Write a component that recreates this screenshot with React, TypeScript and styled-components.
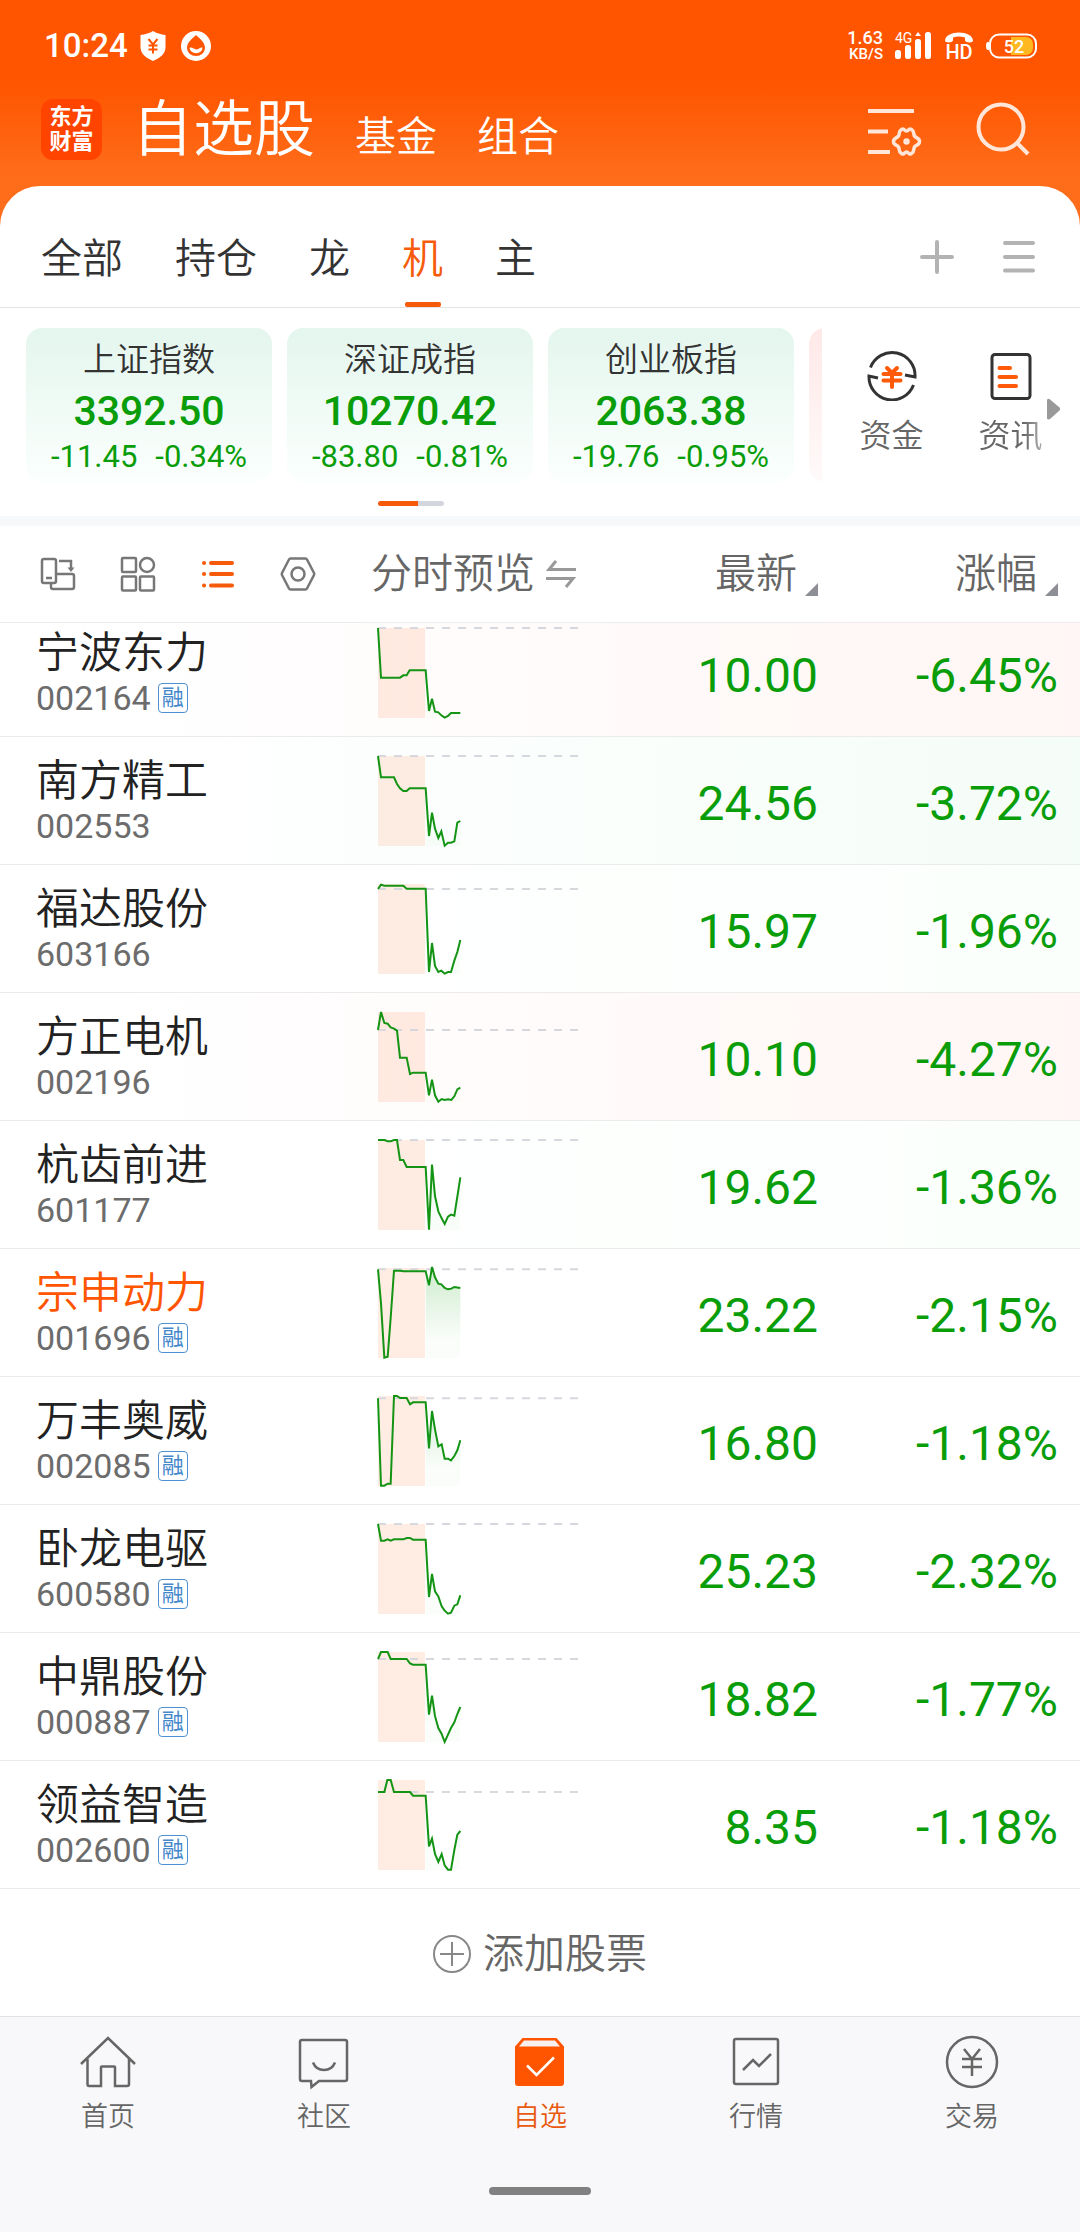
import React from "react";
import styled, { createGlobalStyle } from "styled-components";

const GREEN = "#0a9d0a";
const ORANGE = "#ff5500";
const CJK = `Roboto, "Noto Sans CJK SC", sans-serif`;

const GlobalStyle = createGlobalStyle`
  * { box-sizing: border-box; }
  body { margin: 0; background: #f8f8fa; font-family: ${CJK}; color: #222; }
  h1, h2, p { margin: 0; font-weight: 400; }
  button { border: 0; padding: 0; background: none; font: inherit; color: inherit; cursor: pointer; }
  a { color: inherit; text-decoration: none; }
  svg { display: block; flex: none; }
`;

const Screen = styled.div`
  display: flex;
  flex-direction: column;
  min-height: 100vh;
  background: #fff;
`;

/* Header */

const Header = styled.header`
  padding-bottom: 40px;
  margin-bottom: -40px;
  background: linear-gradient(${ORANGE} 0, ${ORANGE} 84px, #ff6d1a 176px);
  color: #fff;
`;

const StatusBar = styled.div`
  display: flex;
  align-items: center;
  height: 92px;
  padding: 0 42px 0 44px;
`;

const Clock = styled.time`
  margin-right: 12px;
  font-size: 33px;
  font-weight: 500;
  line-height: 40px;
`;

const StatusGroup = styled.div<{ $gap: number; $push?: boolean }>`
  display: flex;
  align-items: center;
  gap: ${(p) => p.$gap}px;
  margin-left: ${(p) => (p.$push ? "auto" : "0")};
`;

const NetSpeed = styled.div`
  display: flex;
  flex-direction: column;
  align-items: flex-end;
  font-size: 18px;
  font-weight: 500;
  line-height: 16px;
  small { font-size: 15px; line-height: 16px; }
`;

const TitleBar = styled.div`
  display: flex;
  align-items: center;
  height: 94px;
  padding: 0 50px 20px 41px;
`;

const Logo = styled.div`
  display: grid;
  place-content: center;
  width: 61px;
  height: 61px;
  margin-right: 30px;
  border-radius: 12px;
  background: #ff4400;
  font-size: 22px;
  font-weight: 700;
  line-height: 25px;
  text-align: center;
`;

const TitleTabs = styled.nav`
  display: flex;
  align-items: baseline;
  gap: 40px;
  padding-top: 8px;
`;

const TitleTab = styled.a<{ $active?: boolean }>`
  font-size: ${(p) => (p.$active ? 61 : 41)}px;
  line-height: 74px;
  font-weight: 350;
`;

const TitleActions = styled.div`
  display: flex;
  align-items: center;
  gap: 54px;
  margin-left: auto;
`;

/* Group tabs */

const Panel = styled.main`
  display: flex;
  flex-direction: column;
  border-radius: 40px 40px 0 0;
  background: #fff;
`;

const GroupBar = styled.div`
  display: flex;
  align-items: stretch;
  justify-content: space-between;
  height: 122px;
  padding: 0 45px 0 41px;
  border-bottom: 1px solid #e4e4e4;
`;

const GroupTabs = styled.nav`
  display: flex;
  gap: 52px;
`;

const GroupTab = styled.button<{ $active?: boolean }>`
  display: flex;
  flex-direction: column;
  align-items: center;
  justify-content: space-between;
  padding-top: 43px;
  font-size: 41px;
  font-weight: 350;
  line-height: 60px;
  color: ${(p) => (p.$active ? "#f55b0a" : "#333")};
  &::after {
    content: "";
    width: 36px;
    height: 5px;
    border-radius: 2px;
    background: ${(p) => (p.$active ? "#f55b0a" : "transparent")};
  }
`;

const GroupActions = styled.div`
  display: flex;
  align-items: center;
  gap: 49px;
  height: 141px;
`;

/* Market indices */

const Market = styled.section`
  display: flex;
  align-items: flex-start;
  padding: 20px 0 10px 26px;
`;

const IndexArea = styled.div`
  flex: 1;
  min-width: 0;
  max-width: 796px;
`;

const IndexList = styled.div`
  display: flex;
  gap: 15px;
  overflow: hidden;
`;

const IndexCard = styled.button<{ $up?: boolean }>`
  flex: none;
  display: flex;
  flex-direction: column;
  align-items: center;
  width: 246px;
  height: 154px;
  padding-top: 8px;
  border-radius: 16px;
  background: linear-gradient(${(p) => (p.$up ? "#ffe8e8" : "#e4f6ee")}, ${(p) => (p.$up ? "#fffafa" : "#fbfffd")});
  color: ${GREEN};
`;

const IndexName = styled.span`
  font-size: 33px;
  font-weight: 350;
  line-height: 48px;
  color: #333;
`;

const IndexValue = styled.strong`
  font-size: 41px;
  font-weight: 500;
  line-height: 54px;
`;

const IndexChange = styled.span`
  display: flex;
  gap: 18px;
  font-size: 31px;
  line-height: 38px;
`;

const Pager = styled.div`
  width: 66px;
  height: 5px;
  margin: 19px 0 0 352px;
  border-radius: 3px;
  background: linear-gradient(90deg, #f55b0a 40px, #d3d6dc 40px);
`;

const Shortcuts = styled.nav`
  flex: none;
  display: flex;
  align-items: flex-start;
  padding: 23px 19px 0 38px;
`;

const Shortcut = styled.a<{ $faded?: boolean }>`
  display: flex;
  flex-direction: column;
  align-items: center;
  gap: 12px;
  width: 63px;
  margin-right: ${(p) => (p.$faded ? 5 : 56)}px;
  font-size: 32px;
  font-weight: 350;
  line-height: 46px;
  color: #666;
  white-space: nowrap;
  span { -webkit-mask-image: ${(p) => (p.$faded ? "linear-gradient(90deg, #000 70%, rgba(0,0,0,.5))" : "none")}; }
`;

const MoreButton = styled.button`
  align-self: center;
  padding-top: 8px;
`;

/* Quote table */

const ListHead = styled.div`
  display: grid;
  grid-template-columns: 371px 207px 1fr 1fr;
  align-items: center;
  height: 107px;
  padding-right: 22px;
  border-top: 10px solid #f7f8fa;
  border-bottom: 1px solid #ececec;
  font-size: 41px;
  font-weight: 350;
  line-height: 60px;
  color: #666;
`;

const ViewModes = styled.div`
  display: flex;
  gap: 44px;
  padding-left: 40px;
`;

const PreviewHead = styled.button`
  display: flex;
  align-items: center;
  gap: 11px;
  white-space: nowrap;
`;

const SortHead = styled.button`
  display: flex;
  align-items: center;
  justify-content: flex-end;
  gap: 8px;
  svg { margin-top: 30px; }
`;

const ListWindow = styled.div`
  display: flex;
  flex-direction: column;
  justify-content: flex-end;
  height: 1266px;
  overflow: hidden;
`;

const Table = styled.table`
  display: block;
`;

const TableBody = styled.tbody`
  display: block;
`;

const Row = styled.tr<{ $tint: string }>`
  display: grid;
  grid-template-columns: 378px 200px 1fr 1fr;
  align-items: center;
  height: 128px;
  padding-right: 22px;
  border-bottom: 1px solid #ebebeb;
  background: linear-gradient(90deg, #fff 10%, ${(p) => p.$tint});
`;

const NameCell = styled.td`
  padding: 0 0 4px 36px;
`;

const StockName = styled.p<{ $hot?: boolean }>`
  font-size: 43px;
  font-weight: 350;
  line-height: 54px;
  color: ${(p) => (p.$hot ? ORANGE : "#222")};
`;

const StockCode = styled.p`
  display: flex;
  align-items: center;
  gap: 7px;
  font-size: 34px;
  line-height: 36px;
  color: #6c6c6c;
`;

const MarginTag = styled.span`
  display: grid;
  place-content: center;
  width: 30px;
  height: 30px;
  border: 1px solid #4f90d2;
  border-radius: 4px;
  font-size: 22px;
  line-height: 26px;
  color: #4488cc;
`;

const ChartCell = styled.td`
  padding: 0;
`;

const NumberCell = styled.td`
  padding: 6px 0 0;
  font-size: 48px;
  line-height: 60px;
  text-align: right;
  color: ${GREEN};
`;

const AddStock = styled.button`
  display: flex;
  align-items: center;
  justify-content: center;
  gap: 12px;
  height: 127px;
  padding-top: 2px;
  font-size: 41px;
  font-weight: 350;
  line-height: 60px;
  color: #666;
`;

/* Bottom navigation */

const BottomNav = styled.nav`
  flex: 1;
  display: flex;
  flex-direction: column;
  border-top: 1px solid #e2e2e2;
  background: #f8f8fa;
`;

const NavItems = styled.div`
  display: grid;
  grid-template-columns: repeat(5, 1fr);
  padding-top: 17px;
`;

const NavItem = styled.a<{ $active?: boolean }>`
  display: flex;
  flex-direction: column;
  align-items: center;
  gap: 7px;
  font-size: 27px;
  font-weight: 350;
  line-height: 40px;
  color: ${(p) => (p.$active ? "#e85a10" : "#666")};
`;

const HomeHandle = styled.div`
  width: 102px;
  height: 8px;
  margin: 50px auto 36px;
  border-radius: 4px;
  background: #808080;
`;

/* Drawings */

const ShieldIcon = () => (
  <svg width="26" height="30" viewBox="0 0 26 30">
    <path d="M13 0 C16 2 21 3.500 25.500 4 V16 C25.500 23 20 27 13 30 C6 27 0.500 23 0.500 16 V4 C5 3.500 10 2 13 0 Z" fill="#fff" />
    <path d="M8.500 8 L13 13.500 L17.500 8 M13 13.500 V22.500 M8.500 14.500 H17.500 M8.500 18.500 H17.500" stroke={ORANGE} strokeWidth="2" fill="none" />
  </svg>
);

const DropIcon = () => (
  <svg width="30" height="30" viewBox="0 0 30 30">
    <circle cx="15" cy="15" r="15" fill="#fff" />
    <path d="M15 4 C18 7 24 11 24 17 A9 8 0 0 1 6 17 C6 11 12 7 15 4 Z" fill={ORANGE} />
    <path d="M8.500 17 C11 15.500 13 18.500 15.500 18.500 C18 18.500 18.500 16 21.500 16.500 A6.500 5.500 0 0 1 8.500 17 Z" fill="#fff" />
  </svg>
);

const SignalIcon = () => (
  <svg width="37" height="28" viewBox="0 0 37 28" overflow="visible">
    <text x="0" y="10.500" fontSize="14" fontFamily="Roboto, sans-serif" fill="#fff">4G</text>
    <g fill="#fff">
      <rect x="0" y="18" width="6" height="9" rx="2.500" />
      <rect x="10" y="13" width="6" height="14" rx="2.500" />
      <rect x="20" y="7" width="6" height="20" rx="2.500" />
      <path d="M23 0 L26 4 H20 Z" />
      <rect x="30" y="0" width="6" height="27" rx="2.500" />
    </g>
  </svg>
);

const HdIcon = () => (
  <svg width="30" height="28" viewBox="0 0 30 28" overflow="visible">
    <path d="M1 9 C1 -2.500 29 -2.500 29 9 C29 11 21.500 11 21 8.500 V5.500 C17 4 13 4 9 5.500 V8.500 C8.500 11 1 11 1 9 Z" fill="#fff" />
    <text x="15" y="27" textAnchor="middle" fontSize="20" fontWeight="500" fontFamily="Roboto, sans-serif" fill="#fff">HD</text>
  </svg>
);

const BatteryIcon = () => (
  <svg width="52" height="26" viewBox="0 0 52 26">
    <path d="M2 9 H3 V17 H2 A2 4 0 0 1 2 9 Z" fill="#fff" />
    <rect x="4" y="1.500" width="46" height="23" rx="9" fill="none" stroke="#fff" strokeWidth="2" />
    <path d="M25 4 H40 A7 7 0 0 1 47 11 V15 A7 7 0 0 1 40 22 H25 Z" fill="#ffb820" />
    <text x="28" y="19.500" textAnchor="middle" fontSize="18" fontWeight="500" fontFamily="Roboto, sans-serif" fill="#fff">52</text>
  </svg>
);

const ListSettingsIcon = () => (
  <svg width="54" height="48" viewBox="0 0 54 48" overflow="visible" fill="none" stroke="#ffe6d8" strokeWidth="4">
    <path d="M0 6 H46 M0 26.500 H20 M0 47 H22" />
    <path d="M33.500 24.500 C36.500 22.500 36 26 38.500 26 C41 26 40.500 22.500 43.500 24.500 C47 26.500 45 28.500 46.500 31 C48 33.500 51.500 32.500 51.500 36.500 C51.500 40.500 48 39.500 46.500 42 C45 44.500 47 46.500 43.500 48.500 C40.500 50.500 41 47 38.500 47 C36 47 36.500 50.500 33.500 48.500 C30 46.500 32 44.500 30.500 42 C29 39.500 25.500 40.500 25.500 36.500 C25.500 32.500 29 33.500 30.500 31 C32 28.500 30 26.500 33.500 24.500 Z" strokeWidth="3.500" />
    <circle cx="38.500" cy="36.500" r="3.200" fill="#ffe6d8" stroke="none" />
  </svg>
);

const SearchIcon = () => (
  <svg width="54" height="54" viewBox="0 0 54 54" fill="none" stroke="#ffe6d8" strokeWidth="4">
    <circle cx="25" cy="25" r="22.500" />
    <path d="M41 41 L52 52" />
  </svg>
);

const PlusIcon = () => (
  <svg width="34" height="34" viewBox="0 0 34 34" stroke="#b3b3b3" strokeWidth="4" strokeLinecap="round">
    <path d="M17 2 V32 M2 17 H32" />
  </svg>
);

const MenuIcon = () => (
  <svg width="32" height="34" viewBox="0 0 32 34" stroke="#b3b3b3" strokeWidth="4" strokeLinecap="round">
    <path d="M2 3 H30 M2 17 H30 M2 30.500 H30" />
  </svg>
);

const FundIcon = () => (
  <svg width="50" height="50" viewBox="0 0 50 50" fill="none" stroke="#333" strokeWidth="3">
    <path d="M3.500 16.500 A23 23 0 0 1 48 26 L38 24" />
    <path d="M46.500 34 A23 23 0 0 1 2 25 L11 27" />
    <path d="M20 17 L25 22 L30 17 M25 22 V36 M16.500 23 H33.500 M16.500 29.500 H33.500" stroke="#ff5a0a" strokeWidth="4" strokeLinecap="round" />
  </svg>
);

const NewsIcon = () => (
  <svg width="42" height="50" viewBox="0 0 42 50" fill="none" stroke="#333" strokeWidth="3">
    <rect x="2" y="3.500" width="38" height="44" rx="3" />
    <path d="M9.500 17 H20 M9.500 26 H26 M9.500 35 H26" stroke="#ff5a0a" strokeWidth="4" strokeLinecap="round" />
  </svg>
);

const MoreIcon = () => (
  <svg width="14" height="22" viewBox="0 0 14 22">
    <path d="M0 2 Q1 0 3 1.500 L12.500 9.500 Q14 11 12.500 12.500 L3 21 Q1 22 0 20.500 Z" fill="#999" />
  </svg>
);

const OrientationIcon = () => (
  <svg width="36" height="36" viewBox="0 0 36 36" fill="none" stroke="#777" strokeWidth="2.500">
    <rect x="2" y="3" width="14" height="24" rx="2" />
    <path d="M6 22 H12 M16 18 H32 A2 2 0 0 1 34 20 V31 A2 2 0 0 1 32 33 H13 A2 2 0 0 1 11 31 V27" />
    <path d="M19 5 H31 V13" />
    <path d="M27.500 11.500 H34.500 L31 16 Z" fill="#777" stroke="none" />
  </svg>
);

const GridIcon = () => (
  <svg width="36" height="36" viewBox="0 0 36 36" fill="none" stroke="#777" strokeWidth="2.500">
    <rect x="2" y="2" width="14" height="14" rx="1" />
    <circle cx="27" cy="9" r="7" />
    <rect x="2" y="20.500" width="14" height="14" rx="1" />
    <rect x="20" y="20.500" width="14" height="14" rx="1" />
  </svg>
);

const ListIcon = () => (
  <svg width="36" height="36" viewBox="0 0 36 36" stroke="#f55b0a" strokeWidth="4" strokeLinecap="round">
    <path d="M4 7 H4.100 M11 7 H32 M4 18 H4.100 M11 18 H32 M4 29.500 H4.100 M11 29.500 H32" />
  </svg>
);

const HexIcon = () => (
  <svg width="36" height="36" viewBox="0 0 36 36" fill="none" stroke="#777" strokeWidth="2.500">
    <path d="M10.500 2.500 H25.500 Q26.500 2.500 27 3.500 L34 17 Q34.500 18 34 19 L27 32.500 Q26.500 33.500 25.500 33.500 H10.500 Q9.500 33.500 9 32.500 L2 19 Q1.500 18 2 17 L9 3.500 Q9.500 2.500 10.500 2.500 Z" />
    <circle cx="18" cy="18" r="6.500" />
  </svg>
);

const SwapIcon = () => (
  <svg width="30" height="28" viewBox="0 0 30 28" fill="none" stroke="#999" strokeWidth="3">
    <path d="M10 1 L3 9.500 H30 M0 18.500 H27 L20 27" />
  </svg>
);

const SortCorner = () => (
  <svg width="13" height="13" viewBox="0 0 13 13">
    <path d="M13 0 V13 H0 Z" fill="#8e8e96" />
  </svg>
);

const AddCircleIcon = () => (
  <svg width="38" height="38" viewBox="0 0 38 38" fill="none" stroke="#888" strokeWidth="2">
    <circle cx="19" cy="19" r="18" />
    <path d="M19 7 V31 M7 19 H31" />
  </svg>
);

const HomeIcon = () => (
  <svg width="56" height="56" viewBox="0 0 56 56" fill="none" stroke="#666" strokeWidth="2.500">
    <path d="M1 30 L28 4 L55 30 M7.500 25 V50 Q7.500 52 9 52 H21 V33 Q21 32.500 22 32.500 H34 Q35 32.500 35 33 V52 H47 Q49 52 49 50 V25" />
  </svg>
);

const ChatIcon = () => (
  <svg width="56" height="56" viewBox="0 0 56 56" fill="none" stroke="#666" strokeWidth="2.500">
    <path d="M6 6 H49 Q51 6 51 8 V45 Q51 47 49 47 H23 L15.500 53 L15 47 H6 Q4 47 4 45 V8 Q4 6 6 6 Z" />
    <path d="M17 28.500 Q20 36 28 36 Q36 36 39 28.500" />
  </svg>
);

const WatchIcon = () => (
  <svg width="56" height="56" viewBox="0 0 56 56">
    <path d="M11 5 H44 L51 13 V49 Q51 51 49 51 H6 Q4 51 4 49 V13 Z" fill={ORANGE} stroke={ORANGE} strokeWidth="2" />
    <path d="M12 6.500 H43 L48 12.500 H7 Z" fill="#f7f0ee" />
    <path d="M15 31.500 L24.500 41 L42 23.500" fill="none" stroke="#fff" strokeWidth="2.500" />
  </svg>
);

const TrendIcon = () => (
  <svg width="56" height="56" viewBox="0 0 56 56" fill="none" stroke="#666" strokeWidth="2.500">
    <rect x="6" y="5" width="44" height="45" rx="2" />
    <path d="M15 36 L25 26 L31 32 L43 20" />
  </svg>
);

const YuanIcon = () => (
  <svg width="56" height="56" viewBox="0 0 56 56" fill="none" stroke="#666" strokeWidth="2.500">
    <circle cx="28" cy="28" r="25" />
    <path d="M20 15 L28 25 L36 15 M28 25 V42 M18 25 H38 M18 33 H38" />
  </svg>
);

/* Data */

const indices = [
  { name: "上证指数", value: "3392.50", diff: "-11.45", pct: "-0.34%" },
  { name: "深证成指", value: "10270.42", diff: "-83.80", pct: "-0.81%" },
  { name: "创业板指", value: "2063.38", diff: "-19.76", pct: "-0.95%" },
];

type Stock = {
  name: string;
  code: string;
  margin?: boolean;
  hot?: boolean;
  price: string;
  pct: string;
  tint: string;
  base: number;
  line: string;
};

const RED_TINT = "#fff6f5";
const GREEN_TINT = "#f5fdf8";
const PALE_TINT = "#fbfffc";

const stocks: Stock[] = [
  { name: "宁波东力", code: "002164", margin: true, price: "10.00", pct: "-6.45%", tint: RED_TINT, base: 0,
    line: "0,0 9,149 66,149 76,142 86,142 95,127 143,127 153,249 162,212 171,251 181,253 190,262 200,269 210,264 219,255 247,255" },
  { name: "南方精工", code: "002553", price: "24.56", pct: "-3.72%", tint: GREEN_TINT, base: 0,
    line: "0,0 9,64 48,64 57,84 66,97 76,105 86,105 95,97 143,97 153,240 162,170 171,218 181,246 190,226 200,269 210,260 219,260 229,256 238,200 247,195" },
  { name: "福达股份", code: "603166", price: "15.97", pct: "-1.96%", tint: PALE_TINT, base: 15,
    line: "0,15 9,2 19,5 76,5 86,14 143,14 153,264 162,177 171,246 181,264 190,260 200,269 210,264 219,264 229,230 238,204 247,168" },
  { name: "方正电机", code: "002196", price: "10.10", pct: "-4.27%", tint: RED_TINT, base: 54,
    line: "0,54 9,0 19,33 29,35 38,46 48,50 57,56 66,137 86,137 96,186 105,182 143,182 153,250 162,203 171,250 181,269 191,261 200,264 210,262 220,264 229,253 238,232 247,227" },
  { name: "杭齿前进", code: "601177", price: "19.62", pct: "-1.36%", tint: PALE_TINT, base: 0,
    line: "0,0 20,0 29,4 38,4 48,0 57,0 66,60 76,60 86,81 143,81 153,269 162,74 171,168 181,214 191,235 200,252 210,230 219,224 229,227 238,170 247,112" },
  { name: "宗申动力", code: "001696", margin: true, hot: true, price: "23.22", pct: "-2.15%", tint: "#fff", base: 4,
    line: "0,4 9,106 19,269 29,266 38,150 48,8 67,8 76,10 143,10 153,52 162,-3 171,28 181,47 190,49 200,60 210,64 220,62 229,57 247,60" },
  { name: "万丰奥威", code: "002085", margin: true, price: "16.80", pct: "-1.18%", tint: "#fff", base: 7,
    line: "0,7 9,269 19,269 29,263 38,263 48,0 57,0 66,6 86,6 96,25 105,19 143,19 153,157 162,45 171,100 181,151 191,145 200,188 210,188 219,193 229,180 238,163 247,133" },
  { name: "卧龙电驱", code: "600580", margin: true, price: "25.23", pct: "-2.32%", tint: "#fff", base: 0,
    line: "0,0 9,50 19,50 29,46 38,50 48,46 76,46 86,42 96,42 105,47 143,47 153,219 162,150 171,202 181,217 191,247 200,260 210,269 219,266 229,245 238,241 247,214" },
  { name: "中鼎股份", code: "000887", margin: true, price: "18.82", pct: "-1.77%", tint: "#fff", base: 21,
    line: "0,21 9,0 29,0 38,21 86,21 96,34 105,38 143,38 153,188 162,131 171,192 181,228 191,246 200,270 210,248 219,228 229,211 238,186 247,165" },
  { name: "领益智造", code: "002600", margin: true, price: "8.35", pct: "-1.18%", tint: "#fff", base: 36,
    line: "0,36 19,36 28,0 38,0 48,36 96,36 105,47 143,47 153,199 162,176 171,222 181,246 191,222 200,256 210,269 219,269 229,210 238,164 247,153" },
];

const SESSION_OPEN = 143;

const Sparkline = ({ line, base }: { line: string; base: number }) => {
  const session = line.split(" ").filter((p) => Number(p.split(",")[0]) >= SESSION_OPEN);
  return (
    <svg width="200" height="90" viewBox="0 0 600 270" overflow="visible">
      <defs>
        <linearGradient id="session" gradientUnits="userSpaceOnUse" x1="0" y1="20" x2="0" y2="215">
          <stop offset="0" stopColor={GREEN} stopOpacity="0.18" />
          <stop offset="1" stopColor={GREEN} stopOpacity="0.02" />
        </linearGradient>
      </defs>
      <rect width="141" height="270" fill="#ff6a2a" fillOpacity="0.13" />
      <polygon points={`${session.join(" ")} 247,270 144,270`} fill="url(#session)" />
      <path d={`M0 ${base} H600`} stroke="#d6d8dd" strokeWidth="6" strokeDasharray="24 24" />
      <polyline points={line} fill="none" stroke="#149414" strokeWidth="6" />
    </svg>
  );
};

const navItems = [
  { label: "首页", icon: <HomeIcon /> },
  { label: "社区", icon: <ChatIcon /> },
  { label: "自选", icon: <WatchIcon />, active: true },
  { label: "行情", icon: <TrendIcon /> },
  { label: "交易", icon: <YuanIcon /> },
];

export default function App() {
  return (
    <Screen>
      <GlobalStyle />
      <Header>
        <StatusBar>
          <Clock>10:24</Clock>
          <StatusGroup $gap={15}>
            <ShieldIcon />
            <DropIcon />
          </StatusGroup>
          <StatusGroup $gap={12} $push>
            <NetSpeed>
              <span>1.63</span>
              <small>KB/S</small>
            </NetSpeed>
            <SignalIcon />
            <HdIcon />
            <BatteryIcon />
          </StatusGroup>
        </StatusBar>
        <TitleBar>
          <Logo>东方<br />财富</Logo>
          <TitleTabs>
            <TitleTab href="#stocks" $active>自选股</TitleTab>
            <TitleTab href="#funds">基金</TitleTab>
            <TitleTab href="#portfolio">组合</TitleTab>
          </TitleTabs>
          <TitleActions>
            <button aria-label="设置"><ListSettingsIcon /></button>
            <button aria-label="搜索"><SearchIcon /></button>
          </TitleActions>
        </TitleBar>
      </Header>

      <Panel>
        <GroupBar>
          <GroupTabs>
            {["全部", "持仓", "龙", "机", "主"].map((g) => (
              <GroupTab key={g} $active={g === "机"}>{g}</GroupTab>
            ))}
          </GroupTabs>
          <GroupActions>
            <button aria-label="添加"><PlusIcon /></button>
            <button aria-label="菜单"><MenuIcon /></button>
          </GroupActions>
        </GroupBar>

        <Market>
          <IndexArea>
            <IndexList>
              {indices.map((x) => (
                <IndexCard key={x.name}>
                  <IndexName>{x.name}</IndexName>
                  <IndexValue>{x.value}</IndexValue>
                  <IndexChange><span>{x.diff}</span><span>{x.pct}</span></IndexChange>
                </IndexCard>
              ))}
              <IndexCard $up aria-label="更多指数" />
            </IndexList>
            <Pager />
          </IndexArea>
          <Shortcuts>
            <Shortcut href="#capital"><FundIcon /><span>资金</span></Shortcut>
            <Shortcut href="#news" $faded><NewsIcon /><span>资讯</span></Shortcut>
            <MoreButton aria-label="更多"><MoreIcon /></MoreButton>
          </Shortcuts>
        </Market>

        <ListHead>
          <ViewModes>
            <button aria-label="横屏"><OrientationIcon /></button>
            <button aria-label="宫格"><GridIcon /></button>
            <button aria-label="列表"><ListIcon /></button>
            <button aria-label="列表设置"><HexIcon /></button>
          </ViewModes>
          <PreviewHead>分时预览<SwapIcon /></PreviewHead>
          <SortHead>最新<SortCorner /></SortHead>
          <SortHead>涨幅<SortCorner /></SortHead>
        </ListHead>

        <ListWindow>
          <Table>
            <TableBody>
              {stocks.map((s) => (
                <Row key={s.code} $tint={s.tint}>
                  <NameCell>
                    <StockName $hot={s.hot}>{s.name}</StockName>
                    <StockCode>{s.code}{s.margin && <MarginTag>融</MarginTag>}</StockCode>
                  </NameCell>
                  <ChartCell><Sparkline line={s.line} base={s.base} /></ChartCell>
                  <NumberCell>{s.price}</NumberCell>
                  <NumberCell>{s.pct}</NumberCell>
                </Row>
              ))}
            </TableBody>
          </Table>
        </ListWindow>
        <AddStock><AddCircleIcon />添加股票</AddStock>
      </Panel>

      <BottomNav>
        <NavItems>
          {navItems.map((n) => (
            <NavItem key={n.label} href={`#${n.label}`} $active={n.active}>
              {n.icon}
              {n.label}
            </NavItem>
          ))}
        </NavItems>
        <HomeHandle />
      </BottomNav>
    </Screen>
  );
}
